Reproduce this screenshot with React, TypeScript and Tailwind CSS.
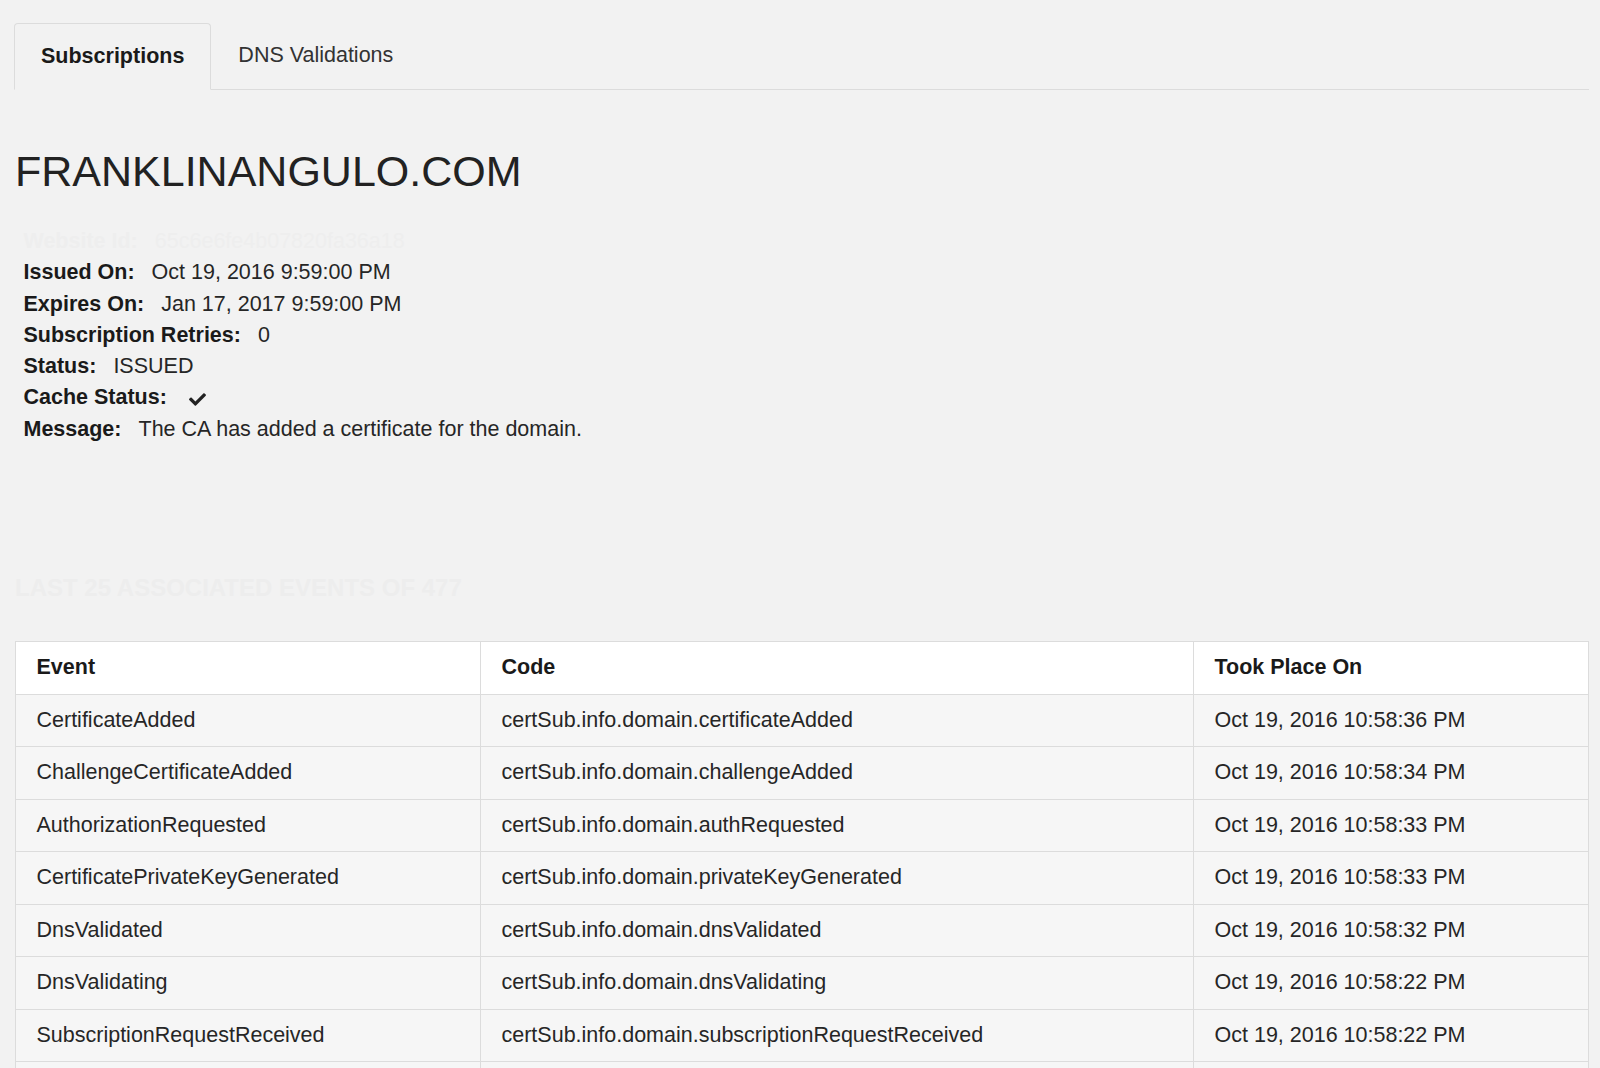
import React from "react";

const details: { label: string; value: React.ReactNode }[] = [
  { label: "Issued On:", value: "Oct 19, 2016 9:59:00 PM" },
  { label: "Expires On:", value: "Jan 17, 2017 9:59:00 PM" },
  { label: "Subscription Retries:", value: "0" },
  { label: "Status:", value: "ISSUED" },
  {
    label: "Cache Status:",
    value: (
      <svg viewBox="0 0 512 512" className="ml-[4px] mt-[2px] h-[17px] w-[19px] fill-[#222]">
        <path d="M173.898 439.404l-166.4-166.4c-9.997-9.997-9.997-26.206 0-36.204l36.203-36.204c9.997-9.998 26.207-9.998 36.204 0L192 312.69 432.095 72.596c9.997-9.997 26.207-9.997 36.204 0l36.203 36.204c9.997 9.997 9.997 26.206 0 36.204l-294.4 294.401c-9.998 9.997-26.207 9.997-36.204-.001z" />
      </svg>
    ),
  },
  { label: "Message:", value: "The CA has added a certificate for the domain." },
];

const events = [
  ["CertificateAdded", "certSub.info.domain.certificateAdded", "Oct 19, 2016 10:58:36 PM"],
  ["ChallengeCertificateAdded", "certSub.info.domain.challengeAdded", "Oct 19, 2016 10:58:34 PM"],
  ["AuthorizationRequested", "certSub.info.domain.authRequested", "Oct 19, 2016 10:58:33 PM"],
  ["CertificatePrivateKeyGenerated", "certSub.info.domain.privateKeyGenerated", "Oct 19, 2016 10:58:33 PM"],
  ["DnsValidated", "certSub.info.domain.dnsValidated", "Oct 19, 2016 10:58:32 PM"],
  ["DnsValidating", "certSub.info.domain.dnsValidating", "Oct 19, 2016 10:58:22 PM"],
  ["SubscriptionRequestReceived", "certSub.info.domain.subscriptionRequestReceived", "Oct 19, 2016 10:58:22 PM"],
];

export default function App() {
  return (
    <div className="h-[1068px] overflow-hidden bg-[#f2f2f2] pl-[15px] pr-[11px] pt-[23px] font-['Liberation_Sans',Arial,sans-serif] text-[21.5px] leading-[31.5px] text-[#262626]">
      {/* Tabs */}
      <div className="flex border-b border-[#dcdcdc]">
        <div className="-mb-px -ml-px rounded-t-[4px] border border-[#dcdcdc] border-b-[#f2f2f2] bg-[#f2f2f2] px-[26px] py-[16.5px] font-bold text-[#1a1a1a]">
          Subscriptions
        </div>
        <div className="ml-px px-[26px] py-[16.5px] text-[#333]">DNS Validations</div>
      </div>

      <h1 className="mt-[58px] text-[43px] leading-[47px] font-normal text-[#222]">FRANKLINANGULO.COM</h1>

      {/* Details */}
      <div className="mt-[31.5px] pl-[8.5px] leading-[31.3px]">
        <div className="flex items-center text-[#eeeeee]">
          <span className="font-bold">Website Id:</span>
          <span className="ml-[17px]">65c6e6fe4b07820fa36a18</span>
        </div>
        {details.map((d) => (
          <div key={d.label} className="flex items-center">
            <span className="font-bold text-[#1a1a1a]">{d.label}</span>
            <span className="ml-[17px] flex items-center">{d.value}</span>
          </div>
        ))}
      </div>

      <h2 className="mt-[129px] text-[24px] leading-[28px] font-bold uppercase text-[#ededed]">
        Last 25 Associated Events of 477
      </h2>

      {/* Events table */}
      <table className="mt-[39px] w-full table-fixed border-collapse border border-[#dcdcdc] text-left">
        <colgroup>
          <col className="w-[465px]" />
          <col className="w-[713px]" />
          <col />
        </colgroup>
        <thead>
          <tr className="bg-white">
            <th className="border border-[#dcdcdc] px-[20.5px] py-[10px] font-bold text-[#1a1a1a]">Event</th>
            <th className="border border-[#dcdcdc] px-[20.5px] py-[10px] font-bold text-[#1a1a1a]">Code</th>
            <th className="border border-[#dcdcdc] px-[20.5px] py-[10px] font-bold text-[#1a1a1a]">Took Place On</th>
          </tr>
        </thead>
        <tbody>
          {events.map((e, i) => (
            <tr key={i} className="bg-[#f6f6f6]">
              <td className="border border-[#dcdcdc] px-[20.5px] py-[10px] whitespace-nowrap">{e[0]}</td>
              <td className="border border-[#dcdcdc] px-[20.5px] py-[10px] whitespace-nowrap">{e[1]}</td>
              <td className="border border-[#dcdcdc] px-[20.5px] py-[10px] whitespace-nowrap">{e[2]}</td>
            </tr>
          ))}
          <tr className="bg-[#f6f6f6]">
            <td className="h-[52px] border border-[#dcdcdc]"></td>
            <td className="h-[52px] border border-[#dcdcdc]"></td>
            <td className="h-[52px] border border-[#dcdcdc]"></td>
          </tr>
        </tbody>
      </table>
    </div>
  );
}
